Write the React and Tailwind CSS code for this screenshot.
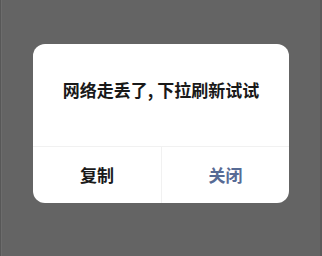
export default function App() {
  const font = { fontFamily: '"Noto Sans CJK SC", "Noto Sans", sans-serif' };
  return (
    <div className="w-[322px] h-[256px] bg-[#646464] border-l border-l-[#575757] border-r-2 border-r-[#5a5a5a]" style={font}>
      <div className="h-full border-l border-l-[#6c6c6c] pt-[44px] pl-[31px]">
        <div className="w-[256px] bg-white rounded-[12px] overflow-hidden">
          <div className="h-[103px] border-b border-[#f1f1f1] pt-[34px] text-center text-[17px] leading-[24px] font-bold text-[#191919]">
            网络走丢了, 下拉刷新试试
          </div>
          <div className="flex h-[56px]">
            <div className="w-[129px] border-r border-[#f1f1f1] flex items-center justify-center text-[17px] font-bold text-[#191919]">
              复制
            </div>
            <div className="flex-1 flex items-center justify-center text-[17px] font-bold text-[#576b95]">
              关闭
            </div>
          </div>
        </div>
      </div>
    </div>
  );
}
